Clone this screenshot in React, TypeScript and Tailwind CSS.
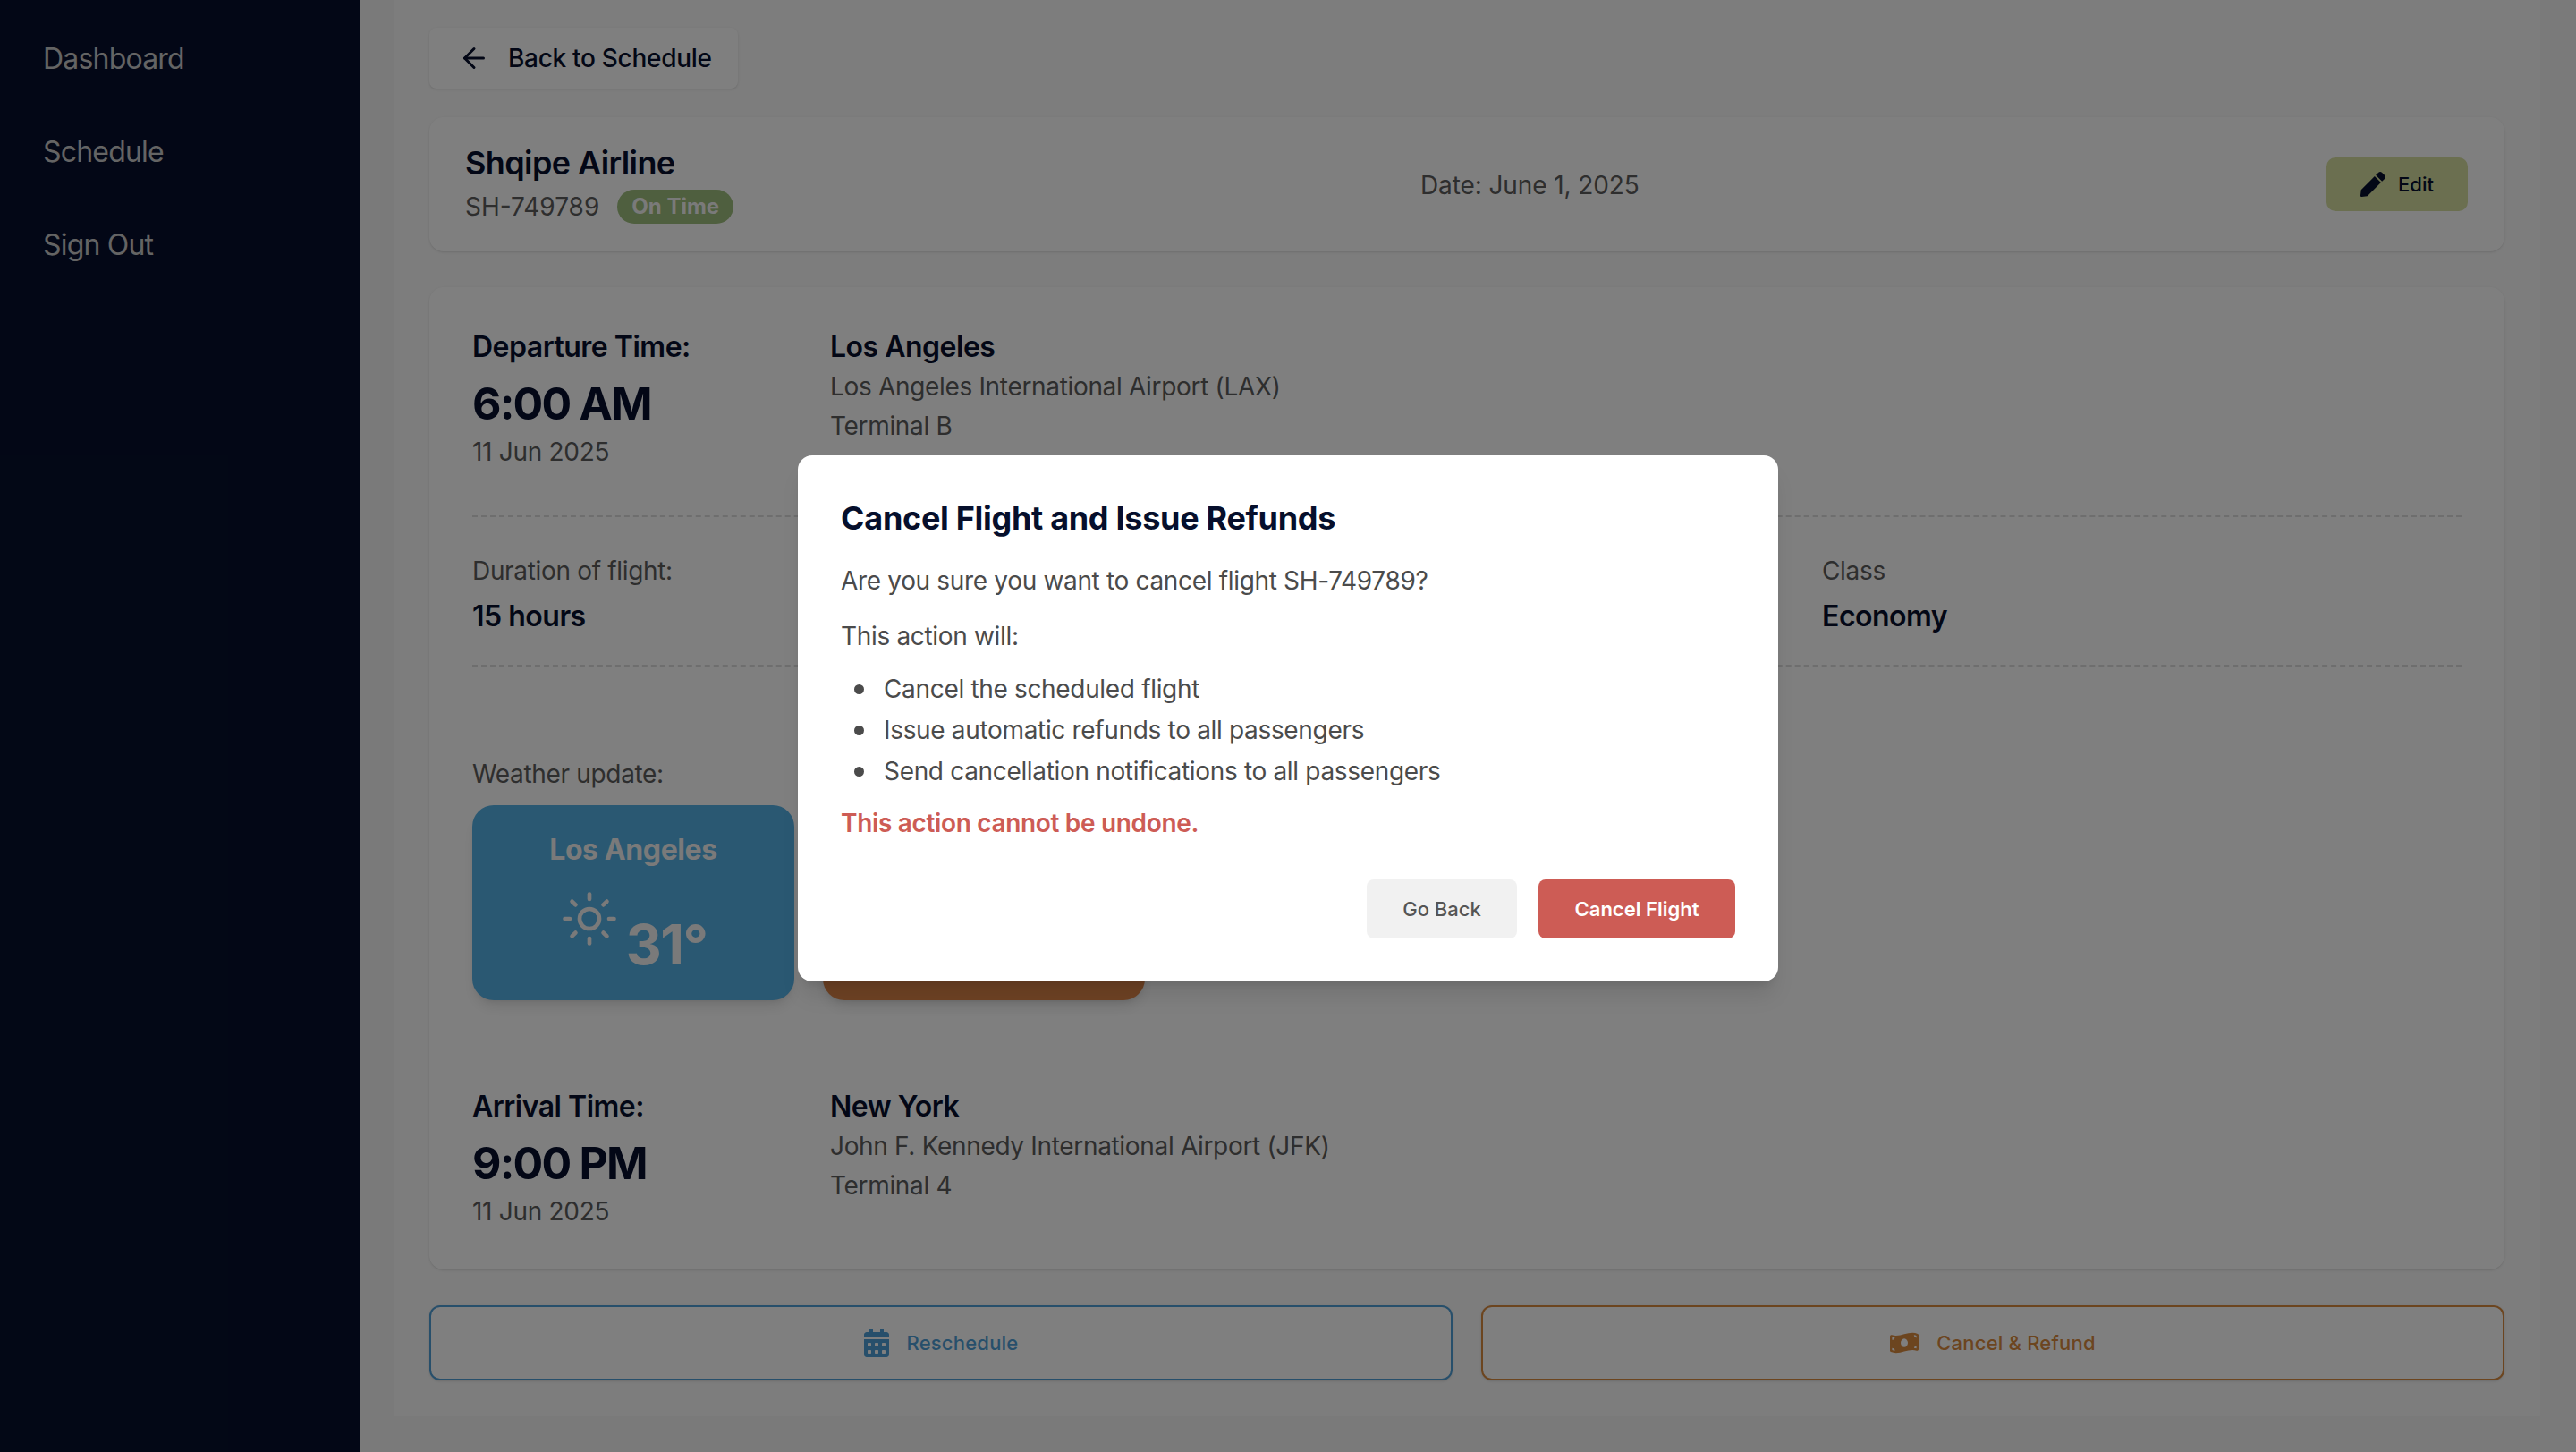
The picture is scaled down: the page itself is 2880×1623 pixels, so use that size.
import { ArrowLeft, Sun } from "lucide-react";
import { FaCalendarAlt, FaMoneyBillWave, FaPen } from "react-icons/fa";

const NAV_ITEMS = ["Dashboard", "Schedule", "Sign Out"];

const RefundItems = [
  "Cancel the scheduled flight",
  "Issue automatic refunds to all passengers",
  "Send cancellation notifications to all passengers",
];

const Sidebar: React.FC = () => (
  <aside className="w-[402px] shrink-0 bg-[#060f2c] pt-[42px] pl-[48px] flex flex-col gap-[56px]">
    {NAV_ITEMS.map((item) => (
      <a key={item} className="text-[32px] leading-[48px] tracking-[-0.8px] text-[#c8c8c8]">
        {item}
      </a>
    ))}
  </aside>
);

type TFlightStop = {
  label: string;
  time: string;
  date: string;
  city: string;
  airport: string;
  terminal: string;
};

const FlightStop: React.FC<TFlightStop> = (param) => (
  <div className="flex">
    <div className="w-[400px]">
      <p className="text-[32px] leading-[44px] tracking-[-0.5px] font-semibold text-[#060f2c]">{param.label}</p>
      <p className="text-[50px] leading-[64px] tracking-[-1.8px] mt-[9px] font-bold text-[#060f2c]">{param.time}</p>
      <p className="text-[28px] leading-[44px] tracking-[-0.3px] text-[#5c5c5c]">{param.date}</p>
    </div>
    <div>
      <p className="text-[32px] leading-[44px] tracking-[-0.5px] font-semibold text-[#060f2c]">{param.city}</p>
      <p className="text-[28px] leading-[44px] tracking-[-0.33px] text-[#5c5c5c]">{param.airport}</p>
      <p className="text-[28px] leading-[44px] tracking-[-0.33px] text-[#5c5c5c]">{param.terminal}</p>
    </div>
  </div>
);

const WeatherCard: React.FC<{ city: string; temp: string; color: string }> = (param) => (
  <div
    className={`w-[360px] h-[218px] rounded-[24px] shadow-lg flex flex-col items-center pt-[28px] text-[#f4f4f4] ${param.color}`}
  >
    <p className="text-[32px] leading-[44px] tracking-[-0.4px] font-bold">{param.city}</p>
    <div className="flex mt-[20px]">
      <Sun className="w-[66px] h-[66px] mt-[2px]" strokeWidth={1.7} />
      <span className="text-[62px] leading-[72px] tracking-[-1.5px] font-bold ml-[8px] mt-[28px]">{param.temp}</span>
    </div>
  </div>
);

const ConfirmModal: React.FC = () => (
  <div className="absolute inset-0 bg-black/50 flex justify-center items-start pt-[509px]">
    <div className="w-[1096px] h-[588px] rounded-[16px] bg-white p-[48px] shadow-xl">
      <h2 className="text-[36px] leading-[44px] tracking-[-0.3px] font-bold text-[#060f2c]">
        Cancel Flight and Issue Refunds
      </h2>
      <p className="text-[28px] leading-[40px] tracking-[-0.33px] mt-[28px] text-[#4b4b4b]">
        Are you sure you want to cancel flight SH-749789?
      </p>
      <p className="text-[28px] leading-[40px] tracking-[-0.33px] mt-[22px] text-[#4b4b4b]">This action will:</p>
      <ul className="pl-[48px] mt-[16px] text-[28px] leading-[46px] tracking-[-0.33px] text-[#4b4b4b]">
        {RefundItems.map((item) => (
          <li key={item} className="relative">
            <span className="absolute -left-[33px] top-[18px] w-[11px] h-[11px] rounded-full bg-[#4b4b4b]" />
            {item}
          </li>
        ))}
      </ul>
      <p className="text-[28px] leading-[40px] tracking-[-0.33px] mt-[15px] font-semibold text-[#cd5c55]">
        This action cannot be undone.
      </p>
      <div className="flex justify-end gap-[24px] mt-[43px]">
        <button
          type="button"
          className="w-[168px] h-[66px] rounded-[8px] bg-[#f1f1f1] text-[22px] font-medium text-[#555555]"
        >
          Go Back
        </button>
        <button
          type="button"
          className="w-[220px] h-[66px] rounded-[8px] bg-[#cd5c55] text-[22px] font-semibold text-white"
        >
          Cancel Flight
        </button>
      </div>
    </div>
  </div>
);

export default function App() {
  return (
    <div className="relative w-[2880px] h-[1623px] overflow-hidden flex bg-[#f4f4f4] font-[Inter,sans-serif]">
      <Sidebar />
      <main className="flex-1 pl-[38px] pr-[40px]">
        <div className="h-[1583px] bg-[#fafafa] px-[40px] pt-[31px]">
          <button
            type="button"
            className="w-[345px] h-[68px] rounded-[8px] bg-white shadow-sm flex items-center pl-[32px] gap-[20px] text-[28px] tracking-[-0.3px] font-medium text-[#060f2c]"
          >
            <ArrowLeft className="w-[36px] h-[36px]" strokeWidth={2} />
            Back to Schedule
          </button>

          <section className="mt-[32px] h-[150px] rounded-[16px] bg-white shadow-sm pl-[40px] pr-[40px] flex items-center justify-between">
            <div className="w-[1068px] flex items-center">
              <div>
                <h1 className="text-[36px] leading-[48px] tracking-[-0.6px] font-semibold text-[#060f2c] -mt-[3px]">
                  Shqipe Airline
                </h1>
                <div className="flex items-center gap-[20px] mt-[5px]">
                  <span className="text-[28px] leading-[40px] text-[#5c5c5c]">SH-749789</span>
                  <span className="h-[38px] px-[16px] rounded-full bg-[#9ebe7e] text-[24px] leading-[38px] font-bold text-[#f4f4f4]">
                    On Time
                  </span>
                </div>
              </div>
            </div>
            <p className="flex-1 text-[28px] tracking-[-0.1px] text-[#5c5c5c] mt-[2px]">Date: June 1, 2025</p>
            <button
              type="button"
              className="w-[158px] h-[60px] mr-[1px] rounded-[10px] bg-[#d6dea0] flex items-center justify-center gap-[14px] text-[22px] font-medium text-[#060f2c]"
            >
              <FaPen className="w-[28px] h-[28px]" />
              Edit
            </button>
          </section>

          <section className="mt-[40px] h-[1098px] rounded-[16px] bg-white shadow-sm px-[48px] pt-[45px]">
            <FlightStop
              label="Departure Time:"
              time="6:00 AM"
              date="11 Jun 2025"
              city="Los Angeles"
              airport="Los Angeles International Airport (LAX)"
              terminal="Terminal B"
            />
            <div className="mt-[49px] border-t-2 border-dashed border-[#dcdcdc] pt-[38px] h-[167px] grid grid-cols-[1509px_1fr]">
              <div>
                <p className="text-[28px] leading-[44px] tracking-[-0.33px] text-[#5c5c5c]">Duration of flight:</p>
                <p className="text-[32px] leading-[44px] tracking-[-0.5px] mt-[7px] font-semibold text-[#060f2c]">15 hours</p>
              </div>
              <div>
                <p className="text-[28px] leading-[44px] tracking-[-0.33px] text-[#5c5c5c]">Class</p>
                <p className="text-[32px] leading-[44px] tracking-[-0.5px] mt-[7px] font-semibold text-[#060f2c]">Economy</p>
              </div>
            </div>
            <div className="border-t-2 border-dashed border-[#dcdcdc] pt-[98px]">
              <p className="text-[28px] leading-[44px] tracking-[-0.33px] text-[#5c5c5c]">Weather update:</p>
              <div className="flex gap-[32px] mt-[13px]">
                <WeatherCard city="Los Angeles" temp="31°" color="bg-[#55b0e4]" />
                <WeatherCard city="New York" temp="28°" color="bg-[#dc8448]" />
              </div>
            </div>
            <div className="mt-[97px]">
              <FlightStop
                label="Arrival Time:"
                time="9:00 PM"
                date="11 Jun 2025"
                city="New York"
                airport="John F. Kennedy International Airport (JFK)"
                terminal="Terminal 4"
              />
            </div>
          </section>

          <div className="mt-[40px] grid grid-cols-2 gap-[32px]">
            <button
              type="button"
              className="h-[84px] rounded-[12px] border-2 border-[#4e9ed6] bg-white shadow-sm flex items-center justify-center gap-[20px] text-[22px] tracking-[0.2px] font-medium text-[#4e9ed6]"
            >
              <FaCalendarAlt className="w-[28px] h-[32px]" />
              Reschedule
            </button>
            <button
              type="button"
              className="h-[84px] rounded-[12px] border-2 border-[#d98a3e] bg-white shadow-sm flex items-center justify-center gap-[20px] text-[22px] tracking-[0.2px] font-medium text-[#d98a3e]"
            >
              <FaMoneyBillWave className="w-[32px] h-[32px]" />
              Cancel &amp; Refund
            </button>
          </div>
        </div>
      </main>
      <ConfirmModal />
    </div>
  );
}
